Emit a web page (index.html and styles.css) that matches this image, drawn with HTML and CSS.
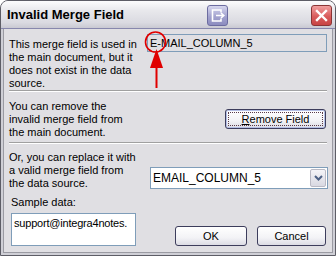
FILE: index.html
```html
<!DOCTYPE html>
<html lang="en">

<head>
  <meta charset="UTF-8" />
  <title>Invalid Merge Field</title>
  <link rel="stylesheet" href="styles.css">
</head>

<body>
  <div class="window">
    <div class="titlebar">
      <span class="title">Invalid Merge Field</span>
      <div class="title-buttons">
        <span class="tbtn tbtn-exit">
          <svg width="21" height="21" viewBox="0 0 21 21">
            <path d="M14 7.5 V5 H5.5 V16 H14 V13.5" fill="none" stroke="#fff" stroke-width="1.6" />
            <path d="M9 10.5 H16.5 M14 8 L16.8 10.5 L14 13" fill="none" stroke="#fff" stroke-width="1.6" />
          </svg>
        </span>
        <span class="tbtn tbtn-close">
          <svg width="21" height="21" viewBox="0 0 21 21">
            <path d="M6 6 L15 15 M15 6 L6 15" stroke="#fff" stroke-width="2.4" stroke-linecap="square" />
          </svg>
        </span>
      </div>
    </div>

    <div class="client">
      <div class="section section-first">
        <p class="msg">This merge field is used in<br>the main document, but it<br>does not exist in the data<br>source.</p>
        <div class="field">E-MAIL_COLUMN_5</div>
      </div>
      <hr>
      <div class="section section-remove">
        <p class="msg">You can remove the<br>invalid merge field from<br>the main document.</p>
        <button class="btn btn-default"><span class="focus"><u>R</u>emove Field</span></button>
      </div>
      <hr>
      <div class="section section-replace">
        <div class="replace-row">
          <p class="msg">Or, you can replace it with<br>a valid merge field from<br>the data source.</p>
          <div class="combo">
            <span class="combo-text">EMAIL_COLUMN_5</span>
            <span class="combo-btn">
              <svg width="9" height="6" viewBox="0 0 9 6">
                <path d="M1 1 L4.5 4.5 L8 1" fill="none" stroke="#4d6185" stroke-width="2" />
              </svg>
            </span>
          </div>
        </div>
        <div class="bottom-row">
          <div class="sample">
            <div class="sample-label">Sample data:</div>
            <div class="sample-box">support@integra4notes.</div>
          </div>
          <div class="actions">
            <button class="btn btn-ok">OK</button>
            <button class="btn btn-cancel">Cancel</button>
          </div>
        </div>
      </div>
    </div>

    <!-- red markup drawn over the screenshot -->
    <svg class="annotation" width="336" height="256" viewBox="0 0 336 256">
      <circle cx="155.5" cy="42" r="10" fill="none" stroke="#e00000" stroke-width="1.6" />
      <path d="M156.5 49 L163 68 L150 68 Z" fill="#e00000" />
      <path d="M156.5 66 V88" stroke="#e00000" stroke-width="2" />
    </svg>
  </div>
</body>

</html>
```

FILE: styles.css
```css
body {
  margin: 0;
  font-family: 'Liberation Sans', Arial, sans-serif;
  font-size: 11px;
  color: #000;
}

.window {
  position: relative;
  width: 336px;
  height: 256px;
  box-sizing: border-box;
  border: 1px solid #5d5d66;
  border-radius: 8px 8px 0 0;
  background-color: #cfcfd6;
  display: flex;
  flex-direction: column;
  overflow: hidden;
}

.titlebar {
  flex: none;
  height: 27px;
  display: flex;
  align-items: center;
  justify-content: space-between;
  padding: 0 3px 0 6px;
  background: linear-gradient(#fcfcfd, #e8e8ec 35%, #dadae1 80%, #c9c9d2);
  border-bottom: 1px solid #8787ad;
}

.title {
  font-weight: bold;
  font-size: 13px;
  color: #000;
}

.title-buttons {
  display: flex;
  gap: 83px;
  margin-top: 2px;
}

.tbtn {
  display: block;
  width: 21px;
  height: 21px;
  box-sizing: border-box;
  border-radius: 3px;
}

.tbtn svg {
  display: block;
  margin: -1px;
}

.tbtn-exit {
  border: 1px solid #6c6ca0;
  background: linear-gradient(#d6d6ee, #a3a3cf 55%, #8c8cbf);
}

.tbtn-close {
  border: 1px solid #8a3535;
  background: linear-gradient(#f0a0a0, #d95c5c 55%, #c84444);
}

.client {
  flex: 1;
  margin: 0 2px 2px;
  border: 1px solid #9a9aa2;
  border-top: none;
  background-color: #e0dfe3;
  display: flex;
  flex-direction: column;
}

.msg {
  margin: 0;
  line-height: 13px;
  white-space: nowrap;
}

hr {
  flex: none;
  margin: 0 5px;
  height: 0;
  border: none;
  border-top: 1px solid #a0a0a0;
  border-bottom: 1px solid #fff;
}

.section {
  padding: 0 5px;
}

.section-first {
  height: 61px;
  box-sizing: border-box;
  padding-top: 5px;
  display: grid;
  grid-template-columns: 138px 180px;
  align-items: start;
}

.section-first .msg {
  margin-top: 4px;
}

.field {
  height: 18px;
  box-sizing: border-box;
  border: 1px solid #7f9db9;
  padding: 0 2px;
  line-height: 16px;
}

.section-remove {
  height: 50px;
  box-sizing: border-box;
  padding-top: 8px;
  display: flex;
  justify-content: space-between;
  align-items: flex-start;
  padding-right: 6px;
}

.btn {
  font-family: 'Liberation Sans', Arial, sans-serif;
  font-size: 11px;
  color: #000;
  height: 20px;
  box-sizing: border-box;
  border: 1px solid #3d3d5c;
  border-radius: 3px;
  background: linear-gradient(#ffffff, #f3f3f6 60%, #dcdce4);
  padding: 0;
  cursor: pointer;
}

.btn-default {
  width: 101px;
  margin-top: 9px;
  padding: 2px;
  box-shadow: inset 0 0 0 1px #b4bfe6;
}

.focus {
  display: block;
  height: 100%;
  box-sizing: border-box;
  border: 1px dotted #5a3a4a;
  line-height: 12px;
}

.section-replace {
  flex: 1;
  padding-top: 7px;
  display: flex;
  flex-direction: column;
}

.replace-row {
  display: grid;
  grid-template-columns: 141px 178px;
  align-items: start;
}

.combo {
  margin-top: 16px;
  height: 22px;
  box-sizing: border-box;
  border: 1px solid #7f9db9;
  background-color: #fff;
  display: flex;
  align-items: center;
  justify-content: space-between;
  padding: 1px;
}

.combo-text {
  font-size: 12px;
  padding-left: 1px;
}

.combo-btn {
  width: 16px;
  height: 18px;
  box-sizing: border-box;
  border: 1px solid #b9b9c4;
  border-radius: 2px;
  background: linear-gradient(#f4f4f8, #d9d9e2);
  display: flex;
  align-items: center;
  justify-content: center;
}

.bottom-row {
  display: flex;
  justify-content: space-between;
  align-items: flex-end;
  padding-right: 1px;
}

.sample {
  padding-left: 2px;
}

.sample-label {
  margin-top: 6px;
  line-height: 13px;
}

.sample-box {
  margin-top: 4px;
  width: 125px;
  height: 33px;
  box-sizing: border-box;
  border: 1px solid #7f9db9;
  background-color: #fff;
  padding: 2px 2px 0;
  line-height: 14px;
  letter-spacing: -0.2px;
  overflow: hidden;
  white-space: nowrap;
}

.actions {
  display: flex;
  gap: 10px;
}

.btn-ok {
  width: 72px;
}

.btn-cancel {
  width: 69px;
}

.annotation {
  position: absolute;
  left: -1px;
  top: -1px;
  pointer-events: none;
}
```
